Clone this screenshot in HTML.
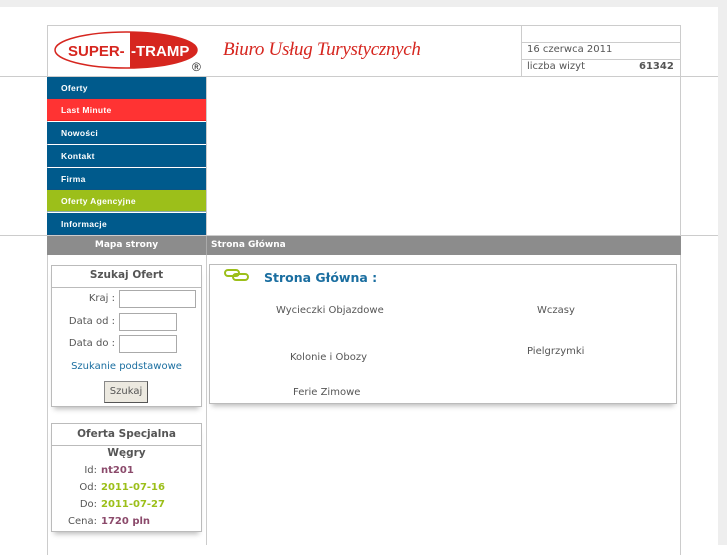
<!DOCTYPE html>
<html><head><meta charset="utf-8"><style>
*{margin:0;padding:0;box-sizing:border-box}
body{width:727px;height:545px;background:#fff;position:relative;overflow:hidden;font-family:"DejaVu Sans",sans-serif;font-size:10px;color:#444}
.a{position:absolute}
.menu div{position:absolute;left:47px;width:159px;height:22px;color:#fff;font-family:"Liberation Sans",sans-serif;font-weight:bold;font-size:8.5px;padding:6px 0 0 14px;letter-spacing:.3px;border-bottom:1px solid #0b5485}
.b{background:#005a8c}
.box{position:absolute;border:1px solid #bbb;background:#fff;box-shadow:0 5px 5px -3px #bbb}
.lbl{position:absolute;text-align:right;font-size:10px;color:#555}
.inp{position:absolute;border:1px solid #aaa;height:18px;background:#fff}
</style></head><body>
<div class="a" style="left:0;top:0;width:727px;height:7px;background:#eee"></div>
<div class="a" style="left:718px;top:0;width:9px;height:545px;background:#eee"></div>
<div class="a" style="left:47px;top:25px;width:634px;height:530px;border:1px solid #ccc;border-bottom:none"></div>
<div class="a" style="left:0;top:76px;width:718px;height:1px;background:#ccc"></div>
<div class="a" style="left:0;top:235px;width:718px;height:1px;background:#ccc"></div>
<!-- logo -->
<svg class="a" style="left:53px;top:29px" width="160" height="46">
<defs><clipPath id="c"><ellipse cx="73" cy="21" rx="71" ry="18"/></clipPath></defs>
<ellipse cx="73" cy="21" rx="71" ry="18" fill="#fff"/>
<rect x="77" y="0" width="80" height="46" fill="#d6261f" clip-path="url(#c)"/>
<ellipse cx="73" cy="21" rx="71" ry="18" fill="none" stroke="#d6261f" stroke-width="1.5"/>
<text x="15" y="27" font-family="Liberation Sans" font-weight="bold" font-size="15" fill="#d6261f">SUPER-</text>
<text x="78" y="27" font-family="Liberation Sans" font-weight="bold" font-size="15" fill="#fff">-TRAMP</text>
<text x="139" y="42" font-family="Liberation Sans" font-size="12" fill="#222">®</text>
</svg>
<div class="a" style="left:223px;top:39px;font-family:'Liberation Serif',serif;font-style:italic;font-size:19px;color:#d6261f;letter-spacing:-.3px">Biuro Usług Turystycznych</div>
<!-- info -->
<div class="a" style="left:521px;top:25px;width:160px;height:51px;border-left:1px solid #ccc"></div>
<div class="a" style="left:521px;top:42px;width:160px;height:1px;background:#ccc"></div>
<div class="a" style="left:521px;top:59px;width:160px;height:1px;background:#ccc"></div>
<div class="a" style="left:527px;top:44px;font-size:10px;color:#555">16 czerwca 2011</div>
<div class="a" style="left:527px;top:61px;font-size:10px;color:#555">liczba wizyt</div>
<div class="a" style="left:639px;top:61px;font-size:10px;color:#555;font-weight:bold">61342</div>
<!-- menu -->
<div class="menu">
<div class="b" style="top:77px">Oferty</div>
<div style="top:99px;background:#ff3333;border-color:#e22">Last Minute</div>
<div class="b" style="top:122px">Nowości</div>
<div class="b" style="top:145px">Kontakt</div>
<div class="b" style="top:168px">Firma</div>
<div style="top:190px;background:#9cbf1a;border-color:#8aa">Oferty Agencyjne</div>
<div class="b" style="top:213px">Informacje</div>
</div>
<div class="a" style="left:206px;top:77px;width:1px;height:468px;background:#ccc"></div>
<!-- gray bar -->
<div class="a" style="left:47px;top:236px;width:634px;height:19px;background:#8c8c8c"></div>
<div class="a" style="left:206px;top:236px;width:1px;height:19px;background:#aaa"></div>
<div class="a" style="left:47px;top:240px;width:159px;text-align:center;color:#fff;font-weight:bold;font-size:9px">Mapa strony</div>
<div class="a" style="left:211px;top:240px;color:#fff;font-weight:bold;font-size:9px">Strona Główna</div>
<!-- search box -->
<div class="box" style="left:51px;top:265px;width:151px;height:142px"></div>
<div class="a" style="left:51px;top:287px;width:151px;height:1px;background:#bbb"></div>
<div class="a" style="left:51px;top:269px;width:151px;text-align:center;font-weight:bold;font-size:10.5px;color:#555">Szukaj Ofert</div>
<div class="lbl" style="left:60px;top:293px;width:55px">Kraj :</div>
<div class="inp" style="left:119px;top:290px;width:77px"></div>
<div class="lbl" style="left:60px;top:316px;width:55px">Data od :</div>
<div class="inp" style="left:119px;top:313px;width:58px"></div>
<div class="lbl" style="left:60px;top:338px;width:55px">Data do :</div>
<div class="inp" style="left:119px;top:335px;width:58px"></div>
<div class="a" style="left:51px;top:361px;width:151px;text-align:center;color:#1a6ea0">Szukanie podstawowe</div>
<div class="a" style="left:104px;top:381px;width:44px;height:22px;background:#ece9e0;border:1px solid #888;border-right-color:#555;border-bottom-color:#555;text-align:center;padding-top:4px;font-size:10px;color:#555">Szukaj</div>
<!-- oferta -->
<div class="box" style="left:51px;top:423px;width:151px;height:109px"></div>
<div class="a" style="left:51px;top:445px;width:151px;height:1px;background:#bbb"></div>
<div class="a" style="left:51px;top:428px;width:151px;text-align:center;font-weight:bold;font-size:10.5px;color:#555">Oferta Specjalna</div>
<div class="a" style="left:51px;top:447px;width:151px;text-align:center;font-weight:bold;font-size:10.5px;color:#555">Węgry</div>
<div class="lbl" style="left:60px;top:465px;width:37px">Id:</div><div class="a" style="left:101px;top:465px;font-weight:bold;color:#8b4a6b">nt201</div>
<div class="lbl" style="left:60px;top:482px;width:37px">Od:</div><div class="a" style="left:101px;top:482px;font-weight:bold;color:#9cbf1a">2011-07-16</div>
<div class="lbl" style="left:60px;top:499px;width:37px">Do:</div><div class="a" style="left:101px;top:499px;font-weight:bold;color:#9cbf1a">2011-07-27</div>
<div class="lbl" style="left:60px;top:516px;width:37px">Cena:</div><div class="a" style="left:101px;top:516px;font-weight:bold;color:#8b4a6b">1720 pln</div>
<!-- main -->
<div class="box" style="left:209px;top:264px;width:468px;height:140px"></div>
<svg class="a" style="left:223px;top:268px" width="28" height="14"><rect x="2" y="2" width="14" height="6" rx="3" fill="none" stroke="#9cbf1a" stroke-width="2"/><rect x="10" y="6" width="15" height="6" rx="3" fill="none" stroke="#9cbf1a" stroke-width="2"/></svg>
<div class="a" style="left:264px;top:270px;font-weight:bold;font-size:12.5px;color:#1a6ea0">Strona Główna :</div>
<div class="a" style="left:276px;top:305px;color:#555">Wycieczki Objazdowe</div>
<div class="a" style="left:537px;top:305px;color:#555">Wczasy</div>
<div class="a" style="left:290px;top:352px;color:#555">Kolonie i Obozy</div>
<div class="a" style="left:527px;top:346px;color:#555">Pielgrzymki</div>
<div class="a" style="left:293px;top:387px;color:#555">Ferie Zimowe</div>
</body></html>
